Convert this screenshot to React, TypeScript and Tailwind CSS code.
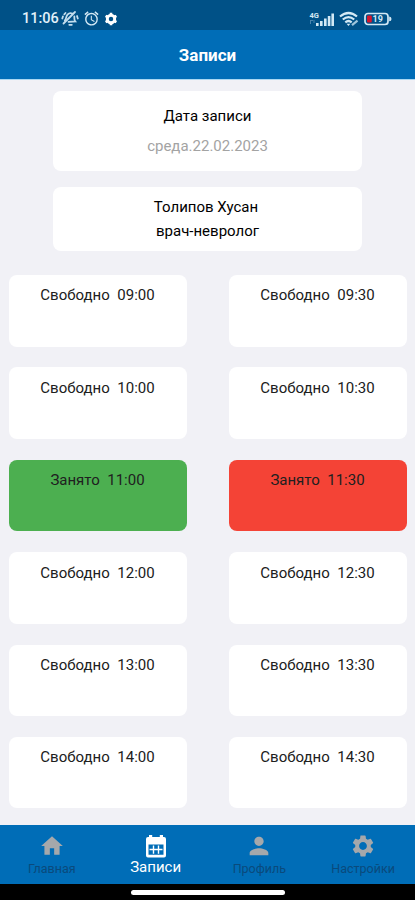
import React from "react";
import { MdHome, MdPerson, MdSettings, MdAlarm } from "react-icons/md";

type Slot = { status: string; time: string; tone?: "green" | "red" };

const slots: Slot[] = [
  { status: "Свободно", time: "09:00" },
  { status: "Свободно", time: "09:30" },
  { status: "Свободно", time: "10:00" },
  { status: "Свободно", time: "10:30" },
  { status: "Занято", time: "11:00", tone: "green" },
  { status: "Занято", time: "11:30", tone: "red" },
  { status: "Свободно", time: "12:00" },
  { status: "Свободно", time: "12:30" },
  { status: "Свободно", time: "13:00" },
  { status: "Свободно", time: "13:30" },
  { status: "Свободно", time: "14:00" },
  { status: "Свободно", time: "14:30" },
];

function BellOff() {
  return (
    <svg width="18" height="17" viewBox="0 0 18 17" fill="none" stroke="#c3deee" strokeWidth="1.8" strokeLinecap="round">
      <path d="M3.800 10.500 C5.500 9 4.800 6.500 6.500 4.600 C8 3 10.200 3 11.300 3.600" />
      <path d="M13.300 6.500 C13.600 8.500 12.800 9.800 14.300 11.500 L7.500 11.800" />
      <path d="M2.500 13.500 L14 2" />
      <path d="M8.300 14.800 H10.800" />
      <path d="M1.300 8.500 L2 6.300 M3.300 4.300 L4.500 3 M16 6 L16.800 8.500" />
    </svg>
  );
}

function StatusGear() {
  return (
    <svg width="14" height="14" viewBox="0 0 14 14" fill="none" stroke="#ffffff">
      <circle cx="7" cy="7" r="3.700" strokeWidth="2.900" />
      <path d="M7 .8V3 M7 11v2.200 M1.600 3.900l1.900 1.100 M10.500 9l1.900 1.100 M1.600 10.100L3.500 9 M10.500 5l1.900-1.100" strokeWidth="2.600" />
    </svg>
  );
}

function StatusBar() {
  return (
    <div className="flex h-[30px] shrink-0 items-start justify-between bg-[#005187] pl-[22px] pr-[23px] pt-[10px] text-[#e2f1fa]">
      <div className="flex h-[17px] items-center">
        <span className="w-[37px] whitespace-nowrap text-[14.500px] font-medium leading-[17px]">11:06</span>
        <span className="ml-[2px]"><BellOff /></span>
        <MdAlarm className="ml-[4px] size-[17px] text-[#d3e9f5]" />
        <span className="ml-[4px]"><StatusGear /></span>
      </div>
      <div className="flex h-[17px] items-center">
        <svg width="26" height="16" viewBox="0 0 26 16" fill="#d3e9f5">
          <text x="0.500" y="7" fontSize="7.500" fontWeight="700">4G</text>
          <path d="M1 9h3v1H2v3H1zM4.500 9h1v3h-1z" opacity=".35" />
          <rect x="7" y="12" width="2.600" height="3" />
          <rect x="11" y="10" width="2.600" height="5" />
          <rect x="15" y="7.500" width="2.600" height="7.500" />
          <rect x="18.800" y="5" width="2.600" height="10" />
          <rect x="22.400" y="2.500" width="2.600" height="12.500" />
        </svg>
        <svg className="ml-[4px]" width="20" height="16" viewBox="0 0 20 16" fill="none" stroke="#d3e9f5" strokeWidth="2.200">
          <path d="M1 5.500 Q9.500 -1.500 18 5.500" />
          <path d="M3.800 8.500 Q9.500 3.700 15.200 8.500" />
          <path d="M6.300 11.300 Q9.500 8.700 12.700 11.300" />
          <path d="M9.500 15 L7.600 12.800 H11.400 Z" fill="#d3e9f5" stroke="none" />
          <path d="M13 14.200 L18.500 9.700" stroke="#9fc5dc" />
        </svg>
        <svg className="ml-[5px]" width="28" height="14" viewBox="0 0 28 14">
          <rect x="1" y="1.500" width="23" height="11" rx="3" fill="none" stroke="#d3e9f5" strokeWidth="1.700" />
          <path d="M25.200 4.500 q2.300 .3 2.300 2.400 t-2.300 2.400z" fill="#d3e9f5" />
          <rect x="3" y="3.500" width="4.800" height="7" rx="1" fill="#d5162d" />
          <text x="8.500" y="10.300" fontSize="9" fontWeight="700" fill="#d3e9f5">19</text>
        </svg>
      </div>
    </div>
  );
}

function SlotCard({ status, time, tone }: Slot) {
  const bg = tone === "green" ? "bg-[#4caf50]" : tone === "red" ? "bg-[#f44336]" : "bg-white";
  return (
    <div className={`h-[71.500px] rounded-[8px] pr-[1px] pt-[10.400px] text-center ${bg}`}>
      <p className="whitespace-pre text-[15px] leading-[20px] text-[#202020]">{status}{"  "}{time}</p>
    </div>
  );
}

function CalendarIcon() {
  return (
    <svg width="22" height="24" viewBox="0 0 22 24" fill="currentColor">
      <path
        fillRule="evenodd"
        d="M3 3H4V1H7.200V3H14.800V1H18V3H19A2 2 0 0 1 21 5V21.500A2 2 0 0 1 19 23.500H3A2 2 0 0 1 1 21.500V5A2 2 0 0 1 3 3ZM3.500 10.500V20.700H18.500V10.500Z"
      />
      <path d="M4.500 14.800H17.500V16.200H4.500ZM7.800 11.500H9.200V19.700H7.800ZM12.800 11.500H14.200V19.700H12.800Z" />
    </svg>
  );
}

const tabs = [
  { label: "Главная", icon: <MdHome className="ml-px size-[26px]" /> },
  { label: "Записи", icon: <CalendarIcon />, active: true },
  { label: "Профиль", icon: <MdPerson className="size-[28px]" /> },
  { label: "Настройки", icon: <MdSettings className="size-[26px]" /> },
];

export default function App() {
  return (
    <div className="flex h-[900px] w-[415px] flex-col overflow-hidden bg-[#f1f1f6] font-[Roboto,sans-serif]">
      <StatusBar />
      <header className="flex h-[50px] shrink-0 items-center justify-center border-b border-[#a9d8f3] bg-[#006db7]">
        <h1 className="pt-px text-[17px] font-bold leading-[22px] text-white">Записи</h1>
      </header>
      <main className="flex grow flex-col pt-[11px]">
        <section className="mx-[53px] h-[80px] w-[309px] rounded-[8px] bg-white pt-[15px] text-center">
          <h2 className="text-[15px] leading-[20px] text-black">Дата записи</h2>
          <p className="mt-[10px] text-[15px] leading-[20px] text-[#a3a3a3]">среда.22.02.2023</p>
        </section>
        <section className="mx-[53px] mt-[16px] h-[64px] w-[309px] rounded-[8px] bg-white pt-[8px] text-center text-[15px] leading-[24px] text-black">
          <p className="pr-[3px]">Толипов Хусан</p>
          <p>врач-невролог</p>
        </section>
        <section className="mt-[24px] grid grid-cols-[178px_178px] gap-x-[42px] gap-y-[20.900px] pl-[9px]">
          {slots.map((s) => <SlotCard key={s.time} {...s} />)}
        </section>
      </main>
      <nav className="grid h-[59px] shrink-0 grid-cols-4 bg-[#006db7]">
        {tabs.map((t) => (
          <div key={t.label} className={`flex flex-col items-center pt-[7px] ${t.active ? "text-white" : "text-[#a5a8ab]"}`}>
            <span className="flex h-[28px] items-center">{t.icon}</span>
            <span className={t.active ? "text-[15px] leading-[15px] text-white" : "text-[12.500px] leading-[18px] text-[#0a4a7c]"}>{t.label}</span>
          </div>
        ))}
      </nav>
      <div className="flex h-[16px] shrink-0 justify-center bg-black pt-[6px]">
        <div className="h-[4.500px] w-[154px] rounded-full bg-white" />
      </div>
    </div>
  );
}
